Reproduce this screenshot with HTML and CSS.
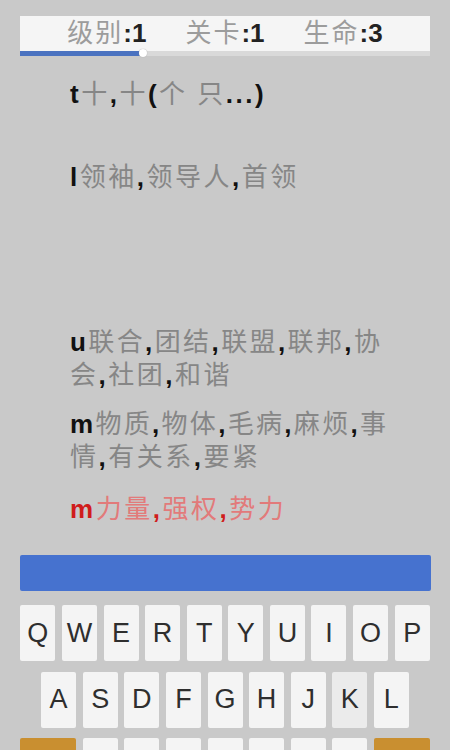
FILE: index.html
```html
<!DOCTYPE html>
<html lang="zh">
<head>
    <meta charset="UTF-8">
    <meta name="viewport" content="width=device-width, initial-scale=1.0">
    <title>打字</title>
    <link rel="stylesheet" href="styles.css">
</head>
<body>
    <div class="status">
        <div class="stats">
            <span class="stat">级别<b>:1</b></span>
            <span class="stat">关卡<b>:1</b></span>
            <span class="stat">生命<b>:3</b></span>
        </div>
        <div class="progress">
            <div class="progress-fill" style="width:30%"></div>
            <div class="progress-knob"></div>
        </div>
    </div>

    <div class="field">
        <p class="word"><b>t</b>十<b>,</b>十<b>(</b>个 只<b>...)</b></p>
        <p class="word word-second"><b>l</b>领袖<b>,</b>领导人<b>,</b>首领</p>
        <p class="word word-third">
            <span class="line full"><b>u</b>联合<b>,</b>团结<b>,</b>联盟<b>,</b>联邦<b>,</b>协</span>
            <span class="line">会<b>,</b>社团<b>,</b>和谐</span>
        </p>
        <p class="word">
            <span class="line full wide"><b>m</b>物质<b>,</b>物体<b>,</b>毛病<b>,</b>麻烦<b>,</b>事</span>
            <span class="line">情<b>,</b>有关系<b>,</b>要紧</span>
        </p>
        <p class="word active"><b>m</b>力量<b>,</b>强权<b>,</b>势力</p>
    </div>

    <div class="input-bar"></div>

    <div class="keyboard">
        <div class="row">
            <div class="key">Q</div><div class="key">W</div><div class="key">E</div><div class="key">R</div><div class="key">T</div>
            <div class="key">Y</div><div class="key">U</div><div class="key">I</div><div class="key">O</div><div class="key">P</div>
        </div>
        <div class="row">
            <div class="key">A</div><div class="key">S</div><div class="key">D</div><div class="key">F</div><div class="key">G</div>
            <div class="key">H</div><div class="key">J</div><div class="key pressed">K</div><div class="key">L</div>
        </div>
        <div class="row">
            <div class="key key-wide"></div>
            <div class="key">Z</div><div class="key">X</div><div class="key">C</div><div class="key">V</div>
            <div class="key">B</div><div class="key">N</div><div class="key">M</div>
            <div class="key key-wide"></div>
        </div>
    </div>
</body>
</html>
```

FILE: styles.css
```css
body{
    margin: 0;
    background-color: #c9c9c9;
    font-family: "Liberation Sans", "Noto Sans CJK SC", sans-serif;
    overflow: hidden;
    height: 750px;
}

.status{
    margin: 16px 20px 0;
    background-color: #f5f5f5;
}
.stats{
    height: 35px;
    display: flex;
    justify-content: center;
    align-items: center;
    gap: 39px;
    font-size: 26px;
    line-height: 35px;
    color: #9c9c9c;
    letter-spacing: 2px;
}
.stat b{
    color: #222;
    letter-spacing: 0;
}
.progress{
    position: relative;
    height: 5px;
    background-color: #d9d9d9;
}
.progress-fill{
    height: 100%;
    background-color: #4a72c0;
}
.progress-knob{
    position: absolute;
    left: 119px;
    top: -2px;
    width: 8px;
    height: 8px;
    border-radius: 50%;
    background-color: #fff;
    box-shadow: 0 0 1px #999;
}

.field{
    height: 499px;
    box-sizing: border-box;
    padding: 22px 0 0 70px;
    display: flex;
    flex-direction: column;
    gap: 16px;
}
.word{
    margin: 0;
    width: 310px;
    font-size: 26px;
    line-height: 33px;
    letter-spacing: 2.5px;
    color: #868686;
}
.word b{
    color: #111;
}
.line{
    display: block;
}
.line.full{
    letter-spacing: 0;
    text-align: justify;
    text-align-last: justify;
}
.line.wide{
    width: 316px;
}
.word-second{
    margin-top: 34px;
}
.word-third{
    margin-top: 116px;
}
.word.active{
    margin-top: 3px;
    color: #e27a7a;
}
.word.active b{
    color: #d01c1c;
}

.input-bar{
    margin: 0 19px 0 20px;
    height: 36px;
    background-color: #4672cf;
    border-radius: 2px;
}

.keyboard{
    margin: 14px 20px 0;
    display: flex;
    flex-direction: column;
    gap: 10.5px;
}
.row{
    display: flex;
    justify-content: center;
    gap: 6.6px;
}
.key{
    width: 35px;
    height: 56px;
    flex-shrink: 0;
    background-color: #f4f4f4;
    border-radius: 2px;
    display: flex;
    justify-content: center;
    align-items: center;
    font-size: 27px;
    color: #2e2e2e;
}
.key.pressed{
    background-color: #ebebeb;
}
.key-wide{
    width: 56.5px;
    background-color: #c98f30;
}
```
